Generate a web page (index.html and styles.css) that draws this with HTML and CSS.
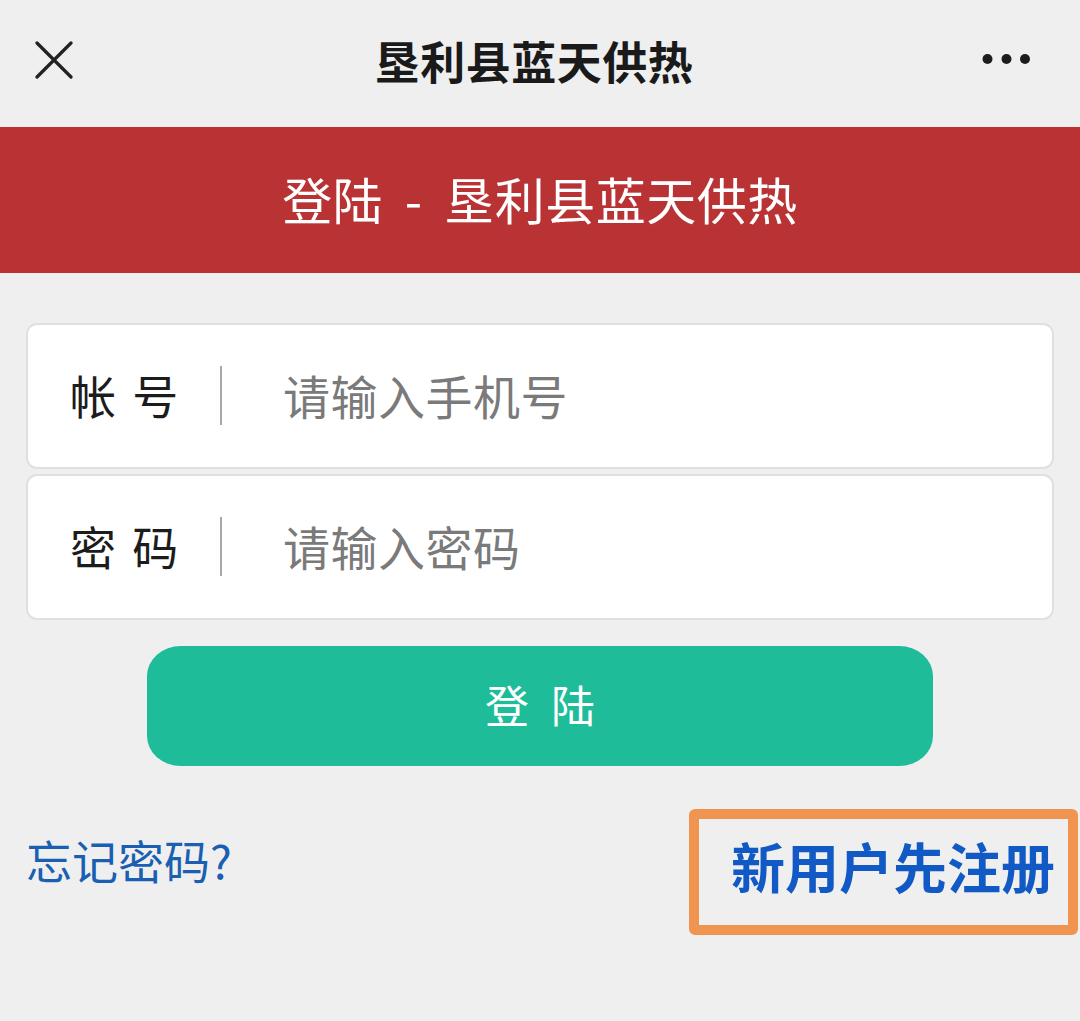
FILE: index.html
```html
<!DOCTYPE html>
<html lang="zh-CN">
<head>
<meta charset="utf-8">
<title>垦利县蓝天供热</title>
<link rel="stylesheet" href="styles.css">
</head>
<body>
<header class="topbar">
  <div class="close">
    <svg width="38" height="38" viewBox="0 0 38 38"><path d="M2 2 L36 36 M36 2 L2 36" stroke="#222" stroke-width="3.2" stroke-linecap="round" fill="none"/></svg>
  </div>
  <div class="title">垦利县蓝天供热</div>
  <div class="more">
    <svg width="48" height="12" viewBox="0 0 48 12"><circle cx="5.5" cy="6" r="5"/><circle cx="24.5" cy="6" r="5"/><circle cx="43" cy="6" r="5"/></svg>
  </div>
</header>
<div class="banner">登陆 - 垦利县蓝天供热</div>
<main class="form">
  <div class="field">
    <span class="label">帐 号</span>
    <span class="sep"></span>
    <span class="placeholder">请输入手机号</span>
  </div>
  <div class="field">
    <span class="label">密 码</span>
    <span class="sep"></span>
    <span class="placeholder">请输入密码</span>
  </div>
  <div class="btn">登 陆</div>
  <div class="links">
    <span class="forgot">忘记密码?</span>
    <span class="register">新用户先注册</span>
  </div>
</main>
</body>
</html>
```
FILE: styles.css
```css
* { box-sizing: border-box; }
html, body { margin: 0; padding: 0; }
body {
  background: #efefef;
  font-family: "Noto Sans CJK SC", "Noto Sans", sans-serif;
  width: 1080px;
  height: 1021px;
  overflow: hidden;
}
.topbar {
  height: 118px;
  display: grid;
  grid-template-columns: 1fr auto 1fr;
  align-items: center;
  margin-bottom: 9px;
}
.close {
  padding-left: 35px;
  display: flex;
  align-items: center;
  margin-top: 2px;
}
.title {
  font-size: 45px;
  font-weight: 700;
  color: #1a1a1a;
  margin-right: 12px;
  margin-top: 2px;
  letter-spacing: 0.5px;
}
.more {
  justify-self: end;
  padding-right: 50px;
  display: flex;
  fill: #1c1c1c;
}
.banner {
  height: 146px;
  background: #b93335;
  color: #fff;
  font-size: 50px;
  word-spacing: 10px;
  letter-spacing: 0.5px;
  display: flex;
  align-items: center;
  justify-content: center;
  padding-bottom: 4px;
}
.form {
  padding: 50px 26px 0 26px;
}
.field {
  height: 146px;
  background: #fff;
  border: 2px solid #e0e0e0;
  border-radius: 11px;
  display: flex;
  align-items: center;
  padding-left: 42px;
  margin-bottom: 5px;
}
.label {
  width: 150px;
  font-size: 46px;
  color: #1c1c1c;
  word-spacing: 6px;
  padding-bottom: 4px;
}
.sep {
  width: 2px;
  height: 59px;
  background: #a8a8a8;
  margin-bottom: 2px;
}
.placeholder {
  margin-left: 61px;
  font-size: 47px;
  letter-spacing: 0.5px;
  color: #7a7a7a;
  padding-bottom: 4px;
}
.btn {
  margin: 26px 121px 0 121px;
  height: 120px;
  background: #1ebc98;
  border-radius: 34px / 30px;
  color: #fff;
  font-size: 44px;
  word-spacing: 12px;
  display: flex;
  align-items: center;
  justify-content: center;
  padding-bottom: 4px;
}
.links {
  margin-top: 43px;
  margin-right: -24px;
  display: flex;
  justify-content: space-between;
  align-items: center;
}
.forgot {
  font-size: 46px;
  color: #1a5fb2;
  margin-bottom: 26px;
}
.register {
  width: 389px;
  height: 126px;
  border: 10px solid #ef9550;
  border-radius: 6px;
  font-size: 54px;
  font-weight: 700;
  color: #1159c4;
  display: flex;
  align-items: center;
  padding: 0 0 14px 32px;
  white-space: nowrap;
}
```
